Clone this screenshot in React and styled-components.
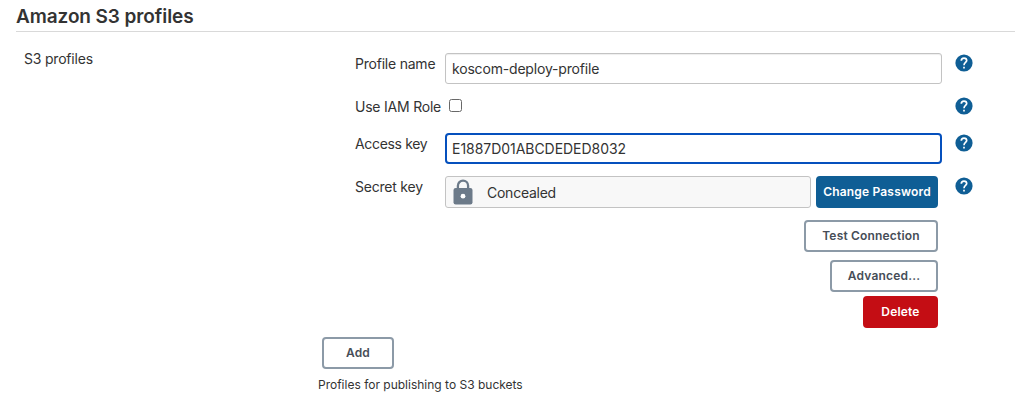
import React from "react";
import styled, { createGlobalStyle } from "styled-components";

const GlobalStyle = createGlobalStyle`
  * { box-sizing: border-box; }
  body {
    margin: 0;
    background: #fff;
    color: #333;
    font-family: Inter, "Liberation Sans", sans-serif;
    font-size: 14px;
    line-height: 20px;
    letter-spacing: -0.2px;
  }
`;

const Page = styled.main`
  height: 409px;
  padding: 0 8px 0 16px;
  overflow: hidden;
`;

const Heading = styled.h2`
  height: 32px;
  margin: 0;
  padding-top: 5px;
  border-bottom: 1px solid #d9d9d9;
  font-size: 19px;
  font-weight: 600;
  line-height: 24px;
  letter-spacing: -0.09px;
`;

const Section = styled.section`
  display: flex;
  padding-left: 8px;
`;

const SectionLabel = styled.div`
  width: 294px;
  padding-top: 17px;
`;

const Content = styled.div`
  flex: 1;
  padding-top: 21px;
`;

const Row = styled.div`
  display: grid;
  grid-template-columns: 90px 497px 1fr;
  height: ${(p) => p.$height}px;
  margin-left: 37px;
`;

const Label = styled.label`
  padding-top: 1px;
  white-space: nowrap;
  letter-spacing: ${(p) => p.$spacing ?? -0.22}px;
`;

const TextInput = styled.input`
  width: 497px;
  height: 31px;
  padding: ${(p) => (p.$active ? "0 5px" : "0 6px")};
  border: ${(p) => (p.$active ? "2px solid #0550bd" : "1px solid #c3c3c3")};
  border-radius: ${(p) => (p.$active ? 4 : 3)}px;
  outline: none;
  box-shadow: ${(p) => (p.$active ? "none" : "inset 0 1px 1px rgba(0, 0, 0, 0.07)")};
  background: #fff;
  color: #333;
  font: inherit;
  letter-spacing: ${(p) => (p.$active ? -0.04 : -0.18)}px;
`;

const Checkbox = styled.input`
  appearance: none;
  width: 13px;
  height: 13px;
  margin: 3px 0 0 4px;
  border: 1px solid #686868;
  border-radius: 2.5px;
  background: #fff;
`;

const Help = styled.span`
  height: 18px;
  margin: 1px 0 0 13px;
  svg { display: block; }
`;

const SecretControls = styled.div`
  display: flex;
  gap: 5px;
`;

const Concealed = styled.div`
  display: flex;
  align-items: center;
  width: 366px;
  height: 32px;
  padding: 2px 0 0 7px;
  border: 1px solid #c3c3c3;
  border-radius: 3px;
  background: #f8f8f8;
  letter-spacing: -0.25px;
  svg { display: block; margin: -2px 14px 0 0; }
`;

const variants = {
  outline: { background: "#fff", border: "#8c9aa7", color: "#464d57" },
  primary: { background: "#0f5e95", border: "#0f5e95", color: "#fff" },
  danger: { background: "#c40d14", border: "#c40d14", color: "#fff" },
};

const Button = styled.button`
  width: ${(p) => p.$width}px;
  height: 32px;
  padding: 0;
  border: 2px solid ${(p) => variants[p.$variant || "outline"].border};
  border-radius: 4px;
  background: ${(p) => variants[p.$variant || "outline"].background};
  color: ${(p) => variants[p.$variant || "outline"].color};
  font: 600 12px/16px Inter, "Liberation Sans", sans-serif;
  letter-spacing: 0.18px;
  white-space: nowrap;
`;

const Actions = styled.div`
  display: flex;
  flex-direction: column;
  align-items: flex-end;
  gap: 4px;
  width: 620px;
  padding-top: 1px;
`;

const ActionGroup = styled.div`
  display: flex;
  flex-direction: column;
  align-items: flex-end;
  gap: 8px;
`;

const AddArea = styled.div`
  padding: 9px 0 0 4px;
`;

const Description = styled.div`
  margin-top: 6px;
  font-size: 12px;
  line-height: 20px;
  letter-spacing: 0;
`;

function HelpIcon() {
  return (
    <Help>
      <svg width="18" height="18" viewBox="0 0 18 18" fill="none" aria-label="Help">
        <circle cx="9" cy="9" r="8.6" fill="#0f5e95" />
        <path d="M6.3 6.8C6.3 5 7.4 4.1 9 4.1s2.7 1 2.7 2.5C11.7 8.4 9 8.7 9 11.2" stroke="#fff" strokeWidth="1.7" />
        <path d="M8.15 12.7h1.7v1.7h-1.7z" fill="#fff" />
      </svg>
    </Help>
  );
}

function LockIcon() {
  return (
    <svg width="20" height="26" viewBox="0 0 20 26" fill="none" aria-hidden="true">
      <path d="M4.9 10V6.7a5.1 5.1 0 0 1 10.2 0V10" stroke="#6c7a89" strokeWidth="2.3" />
      <rect x=".5" y="8.9" width="19" height="16.6" rx="2.2" fill="#6c7a89" />
      <circle cx="10" cy="17.2" r="2.4" fill="#fff" />
    </svg>
  );
}

export default function App() {
  return (
    <>
      <GlobalStyle />
      <Page>
        <Heading>Amazon S3 profiles</Heading>
        <Section>
          <SectionLabel>S3 profiles</SectionLabel>
          <Content>
            <Row $height={43}>
              <Label htmlFor="profile">Profile name</Label>
              <TextInput id="profile" defaultValue="koscom-deploy-profile" />
              <HelpIcon />
            </Row>
            <Row $height={37}>
              <Label htmlFor="iam">Use IAM Role</Label>
              <Checkbox id="iam" type="checkbox" />
              <HelpIcon />
            </Row>
            <Row $height={43}>
              <Label htmlFor="access" $spacing={-0.33}>Access key</Label>
              <TextInput id="access" $active defaultValue="E1887D01ABCDEDED8032" />
              <HelpIcon />
            </Row>
            <Row $height={43}>
              <Label as="span">Secret key</Label>
              <SecretControls>
                <Concealed><LockIcon />Concealed</Concealed>
                <Button $variant="primary" $width={122}>Change Password</Button>
              </SecretControls>
              <HelpIcon />
            </Row>
            <Actions>
              <ActionGroup>
                <Button $width={134}>Test Connection</Button>
                <Button $width={108}>Advanced...</Button>
              </ActionGroup>
              <Button $variant="danger" $width={75}>Delete</Button>
            </Actions>
            <AddArea><Button $width={72}>Add</Button></AddArea>
            <Description>Profiles for publishing to S3 buckets</Description>
          </Content>
        </Section>
      </Page>
    </>
  );
}
